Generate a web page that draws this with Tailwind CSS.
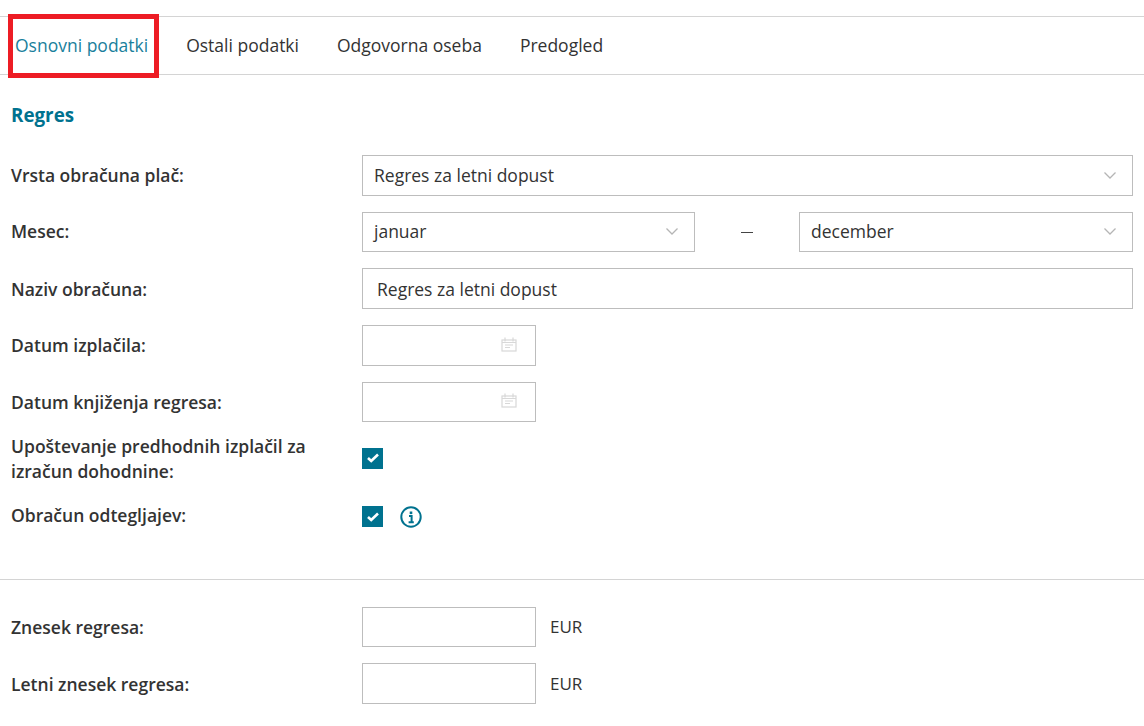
<!DOCTYPE html>
<html><head><meta charset="utf-8"><script src="https://cdn.jsdelivr.net/npm/@tailwindcss/browser@4"></script></head>
<body class="bg-white font-['Open_Sans',sans-serif] text-[#333] overflow-hidden">
<div class="relative w-[1144px] h-[726px] overflow-hidden pt-[16px]">
  <nav class="relative flex h-[59px] border-y border-[#d4d4d4] text-[17.5px] pl-[15px] items-center gap-[38px] pb-[1px]">
    <span class="text-[#1a7f9c]">Osnovni podatki</span><span>Ostali podatki</span><span>Odgovorna oseba</span><span>Predogled</span>
    <div class="absolute left-[8px] top-[-3px] w-[151px] h-[64px] border-[5px] border-[#ed1c24]"></div>
  </nav>
  <h2 class="ml-[11px] mt-[27px] h-[27px] leading-[27px] text-[18.8px] font-bold text-[#00728f]">Regres</h2>
  <div class="mt-[26px] pl-[11px] pr-[11px] flex flex-col text-[17.5px] font-semibold">
    <div class="flex items-center h-[41px]"><label class="w-[351px] pb-[1px]">Vrsta obračuna plač:</label>
      <div class="w-[771px] h-full border border-[#bdbdbd] flex items-center justify-between pl-[11px] pr-[16px] pb-[1px] font-normal">Regres za letni dopust<svg class="w-[12px] h-[7px]" viewBox="0 0 12 7" fill="none" stroke="#b5b5b5" stroke-width="1.3"><path d="M0.5 0.5L6 6l5.5-5.5"/></svg></div></div>
    <div class="flex items-center h-[40px] mt-[16px]"><label class="w-[351px] pb-[1px]">Mesec:</label>
      <div class="w-[333px] h-full border border-[#bdbdbd] flex items-center justify-between pl-[11px] pr-[16px] pb-[1px] font-normal">januar<svg class="w-[12px] h-[7px]" viewBox="0 0 12 7" fill="none" stroke="#b5b5b5" stroke-width="1.3"><path d="M0.5 0.5L6 6l5.5-5.5"/></svg></div>
      <div class="w-[104px] flex justify-center"><div class="w-[12px] h-px bg-[#444]"></div></div>
      <div class="w-[334px] h-full border border-[#bdbdbd] flex items-center justify-between pl-[11px] pr-[16px] pb-[1px] font-normal">december<svg class="w-[12px] h-[7px]" viewBox="0 0 12 7" fill="none" stroke="#b5b5b5" stroke-width="1.3"><path d="M0.5 0.5L6 6l5.5-5.5"/></svg></div></div>
    <div class="flex items-center h-[41px] mt-[16px]"><label class="w-[351px] pt-[1px]">Naziv obračuna:</label>
      <div class="w-[771px] h-full border border-[#bdbdbd] flex items-center pl-[14px] pt-[1px] font-normal">Regres za letni dopust</div></div>
    <div class="flex items-center h-[41px] mt-[16px]"><label class="w-[351px] pb-[1px]">Datum izplačila:</label>
      <div class="w-[174px] h-full border border-[#bdbdbd] flex items-center justify-end pr-[18px] pb-[3px]"><svg class="w-[16px] h-[15px]" viewBox="0 0 16 15" fill="none" stroke="#d8d8d8" stroke-width="1.2"><rect x="1" y="3" width="14" height="11"/><path d="M4 0.5v4M12 0.5v4M1 5.5h14M4 8h8M4 10.5h5"/></svg></div></div>
    <div class="flex items-center h-[40px] mt-[16px]"><label class="w-[351px]">Datum knjiženja regresa:</label>
      <div class="w-[174px] h-full border border-[#bdbdbd] flex items-center justify-end pr-[18px] pb-[3px]"><svg class="w-[16px] h-[15px]" viewBox="0 0 16 15" fill="none" stroke="#d8d8d8" stroke-width="1.2"><rect x="1" y="3" width="14" height="11"/><path d="M4 0.5v4M12 0.5v4M1 5.5h14M4 8h8M4 10.5h5"/></svg></div></div>
    <div class="flex items-center h-[48px] mt-[12px]"><label class="w-[351px] leading-[25px] pr-[40px] pt-[2px]">Upoštevanje predhodnih izplačil za izračun dohodnine:</label>
      <div class="w-[21px] h-[21px] bg-[#00728f] flex items-center justify-center"><svg class="w-[12px] h-[10px]" viewBox="0 0 12 10" fill="none" stroke="#fff" stroke-width="2.6"><path d="M1 5l3.2 3L11 1.5"/></svg></div></div>
    <div class="flex items-center h-[21px] mt-[24px]"><label class="w-[351px] pb-[2px]">Obračun odtegljajev:</label>
      <div class="w-[21px] h-[21px] bg-[#00728f] flex items-center justify-center"><svg class="w-[12px] h-[10px]" viewBox="0 0 12 10" fill="none" stroke="#fff" stroke-width="2.6"><path d="M1 5l3.2 3L11 1.5"/></svg></div>
      <svg class="ml-[17px] w-[22px] h-[22px]" viewBox="0 0 22 22" fill="none"><circle cx="11" cy="11" r="9.7" stroke="#00728f" stroke-width="2"/><path d="M11 5.5v2.6" stroke="#00728f" stroke-width="2.6"/><path d="M9 10h2.6v6M8.6 16.2h5.2" stroke="#00728f" stroke-width="2"/></svg></div>
  </div>
  <div class="mt-[52px] border-t border-[#d4d4d4]"></div>
  <div class="mt-[27px] pl-[11px] flex flex-col text-[17.5px] font-semibold">
    <div class="flex items-center h-[40px]"><label class="w-[351px]">Znesek regresa:</label><div class="w-[174px] h-full border border-[#bdbdbd]"></div><span class="ml-[14px] text-[17px] font-normal">EUR</span></div>
    <div class="flex items-center h-[41px] mt-[16px]"><label class="w-[351px] pt-[1px]">Letni znesek regresa:</label><div class="w-[174px] h-full border border-[#bdbdbd]"></div><span class="ml-[14px] text-[17px] font-normal">EUR</span></div>
  </div>
</div>
</body></html>
